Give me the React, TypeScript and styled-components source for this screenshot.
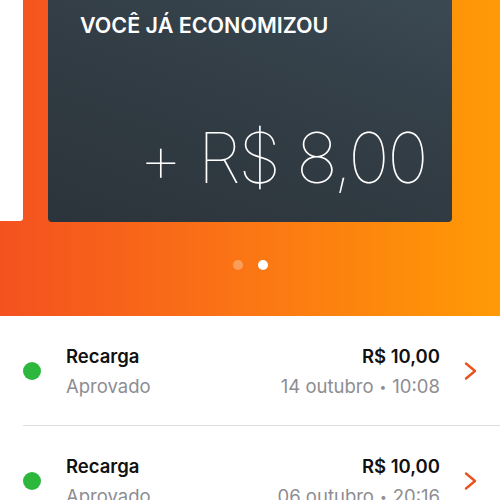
import React from 'react'
import styled, { createGlobalStyle } from 'styled-components'

const GlobalStyle = createGlobalStyle`
  html, body {
    margin: 0;
    padding: 0;
    background: #ffffff;
    font-family: Inter, "Noto Sans", "Liberation Sans", sans-serif;
    -webkit-font-smoothing: antialiased;
  }
`

type Transaction = {
  title: string
  status: string
  amount: string
  date: string
  time: string
}

const transactions: Transaction[] = [
  { title: 'Recarga', status: 'Aprovado', amount: 'R$ 10,00', date: '14 outubro', time: '10:08' },
  { title: 'Recarga', status: 'Aprovado', amount: 'R$ 10,00', date: '06 outubro', time: '20:16' },
]

const Chevron = () => (
  <svg width="16" height="20" viewBox="0 0 16 20" fill="none">
    <path d="M3 2.5l9 7.5-9 7.5" stroke="#e9541d" strokeWidth="2.4" strokeLinecap="round" strokeLinejoin="round" />
  </svg>
)

export default function App() {
  return (
    <Screen>
      <GlobalStyle />
      <Hero>
        <Carousel>
          <PeekCard />
          <SavingsCard>
            <CardTitle>VOCÊ JÁ ECONOMIZOU</CardTitle>
            <Amount>+ R$ 8,00</Amount>
          </SavingsCard>
        </Carousel>
        <Dots>
          <Dot />
          <Dot active />
        </Dots>
      </Hero>
      <List>
        {transactions.map((t, i) => (
          <Row key={i}>
            <StatusDot />
            <RowBody>
              <Line>
                <Title>{t.title}</Title>
                <Title>{t.amount}</Title>
              </Line>
              <Line>
                <Sub>{t.status}</Sub>
                <Sub>
                  {t.date}
                  <Sep>•</Sep>
                  {t.time}
                </Sub>
              </Line>
            </RowBody>
            <Arrow>
              <Chevron />
            </Arrow>
          </Row>
        ))}
      </List>
    </Screen>
  )
}

const Screen = styled.div`
  width: 500px;
  height: 500px;
  overflow: hidden;
  background: #ffffff;
`

const Hero = styled.div`
  height: 316px;
  background: linear-gradient(90deg, #f4511f 0%, #fb7614 50%, #ff9a05 100%);
  display: flex;
  flex-direction: column;
`

const Carousel = styled.div`
  display: flex;
  gap: 25px;
  align-items: flex-start;
`

const PeekCard = styled.div`
  width: 23px;
  height: 221px;
  background: #ffffff;
  border-bottom-right-radius: 3px;
  flex-shrink: 0;
`

const SavingsCard = styled.div`
  width: 404px;
  height: 222px;
  flex-shrink: 0;
  box-sizing: border-box;
  border-bottom-left-radius: 4px;
  border-bottom-right-radius: 4px;
  background: linear-gradient(200deg, #3b4953 0%, #323d45 45%, #2c343b 100%);
  padding: 11px 26px 0 32px;
  display: flex;
  flex-direction: column;
  color: #ffffff;
`

const CardTitle = styled.div`
  font-size: 21.5px;
  font-weight: 600;
  line-height: 28px;
`

const Amount = styled.div`
  margin-top: auto;
  margin-bottom: 24px;
  text-align: right;
  font-size: 70px;
  font-weight: 100;
  line-height: 80px;
  letter-spacing: -2.5px;
`

const Dots = styled.div`
  display: flex;
  justify-content: center;
  gap: 15px;
  margin-top: 38px;
`

const Dot = styled.div<{ active?: boolean }>`
  width: 10px;
  height: 10px;
  border-radius: 50%;
  background: ${(p) => (p.active ? '#ffffff' : 'rgba(255, 255, 255, 0.3)')};
`

const List = styled.div`
  display: flex;
  flex-direction: column;
`

const Row = styled.div`
  display: flex;
  align-items: center;
  height: 110px;
  margin-left: 23px;
  border-bottom: 1px solid #dcdcdc;
  box-sizing: border-box;
`

const StatusDot = styled.div`
  width: 18px;
  height: 18px;
  border-radius: 50%;
  background: #2db83d;
  flex-shrink: 0;
`

const RowBody = styled.div`
  flex: 1;
  margin-left: 25px;
  display: flex;
  flex-direction: column;
  gap: 8px;
`

const Line = styled.div`
  display: flex;
  justify-content: space-between;
  align-items: baseline;
`

const Title = styled.span`
  font-size: 18.5px;
  font-weight: 600;
  color: #111111;
`

const Sub = styled.span`
  font-size: 18.5px;
  font-weight: 400;
  color: #8d8d92;
`

const Sep = styled.span`
  font-size: 12px;
  vertical-align: 2px;
  margin: 0 6px;
`

const Arrow = styled.div`
  width: 59px;
  display: flex;
  justify-content: center;
  padding-left: 1px;
`
